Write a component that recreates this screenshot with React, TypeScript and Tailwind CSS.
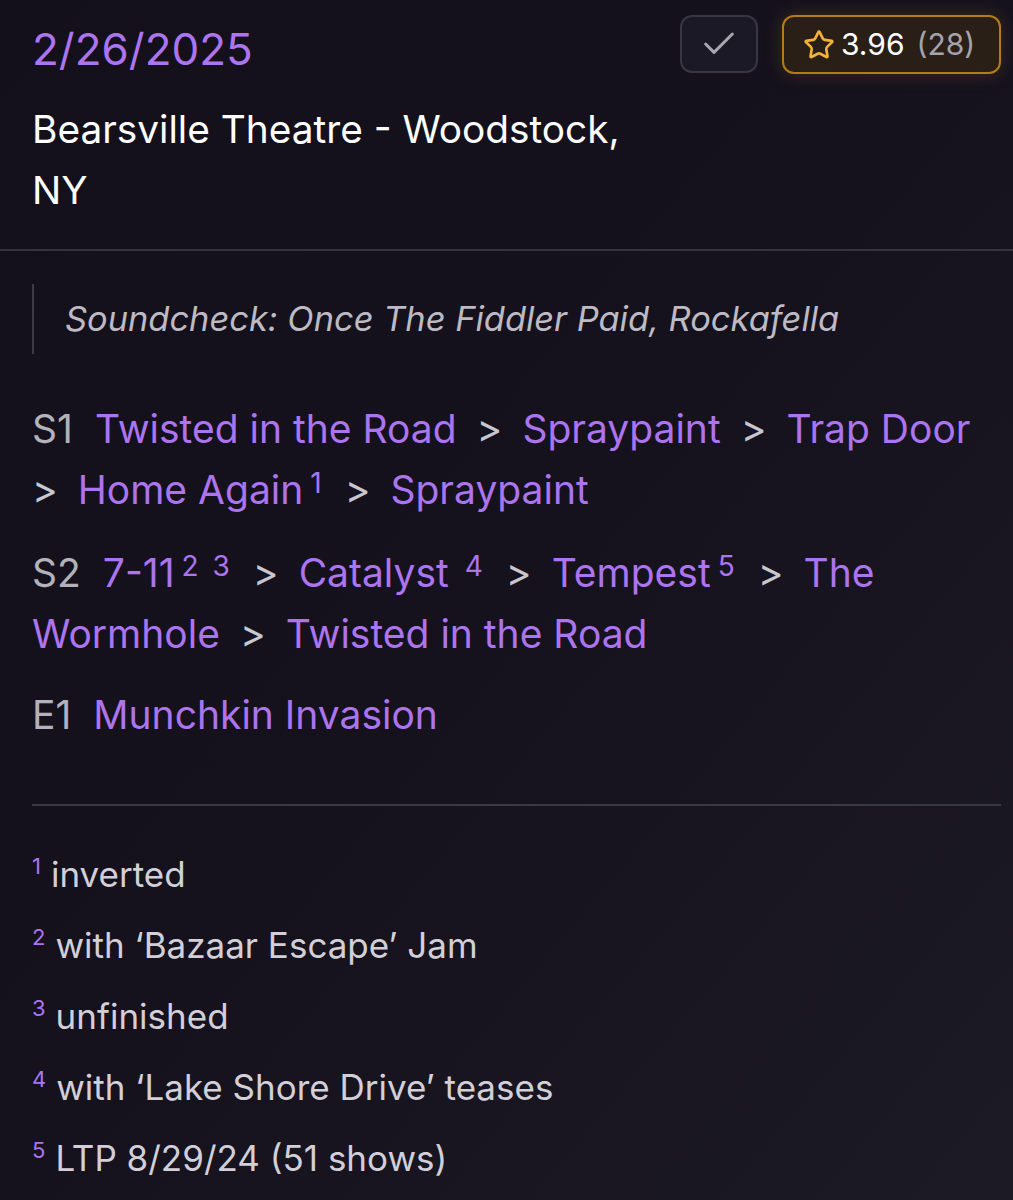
import React from "react";
import { Check, Star } from "lucide-react";

type Song = { title: string; notes?: string; spaced?: boolean };

const font = { fontFamily: "Inter, 'Noto Sans', sans-serif" };

function Arrow({ first }: { first?: boolean }) {
  return (
    <span className={first ? "mr-[20px] text-[#c8c6ce]" : "mx-[20px] text-[#c8c6ce]"}>
      &gt;
    </span>
  );
}

function SongLink({ song }: { song: Song }) {
  return (
    <span className="text-[#ac74ef]">
      {song.title}
      {song.notes && (
        <sup
          className={
            song.spaced
              ? "ml-[16px] text-[28px] top-[-11px] tracking-[3px]"
              : "ml-[7px] text-[28px] top-[-11px] tracking-[3px]"
          }
        >
          {song.notes}
        </sup>
      )}
    </span>
  );
}

function SetBlock({
  label,
  lines,
  className,
}: {
  label: string;
  lines: { songs: Song[]; leadArrow?: boolean }[];
  className?: string;
}) {
  return (
    <div className={className}>
      {lines.map((line, i) => (
        <div key={i} className="flex whitespace-nowrap">
          {i === 0 && <span className="mr-[22px] text-[#b3b1ba]">{label}</span>}
          {line.leadArrow && <Arrow first />}
          {line.songs.map((s, j) => (
            <React.Fragment key={j}>
              {j > 0 && <Arrow />}
              <SongLink song={s} />
            </React.Fragment>
          ))}
        </div>
      ))}
    </div>
  );
}

const footnotes = [
  "inverted",
  "with \u2018Bazaar Escape\u2019 Jam",
  "unfinished",
  "with \u2018Lake Shore Drive\u2019 teases",
  "LTP 8/29/24 (51 shows)",
];

export default function App() {
  return (
    <div
      style={font}
      className="min-h-[1200px] w-[1013px] overflow-hidden bg-gradient-to-br from-[#13101b] via-[#15121e] to-[#1c1a24] text-white"
    >
      <div className="pl-[32px] pr-[12px] pt-[15px] pb-[29px]">
        <div className="flex items-start justify-between">
          <div className="mt-[5px] text-[44px] leading-[59px] text-[#ac74ef]">2/26/2025</div>
          <div className="flex gap-[24px]">
            <button className="flex h-[58px] w-[78px] items-center justify-center rounded-[12px] border-2 border-[#383644] bg-[#1b1925]">
              <Check size={40} className="text-[#a8a6b0]" strokeWidth={1.8} />
            </button>
            <button className="flex h-[59px] w-[219px] items-center gap-[6px] rounded-[12px] border-2 border-[#b47c17] bg-[#2a1f17] pl-[19px] shadow-[0_0_18px_rgba(180,124,23,0.25)]">
              <Star size={32} className="text-[#f2b13a]" strokeWidth={2} />
              <span className="text-[30px] text-white">3.96</span>
              <span className="ml-[6px] text-[30px] text-[#a5a3ab]">(28)</span>
            </button>
          </div>
        </div>
        <div className="mt-[19px] text-[38.8px] leading-[61px] text-white">
          Bearsville Theatre - Woodstock,
          <br />
          NY
        </div>
      </div>

      <div className="h-[2px] bg-[#35333e]" />

      <div className="pl-[32px] pr-[12px]">
        <div className="mt-[33px] border-l-2 border-[#3c3a44] pl-[31px] text-[34.4px] italic leading-[70px] text-[#bdbac3]">
          Soundcheck: Once The Fiddler Paid, Rockafella
        </div>

        <div className="text-[39px] leading-[61px]">
          <SetBlock
            className="mt-[44px]"
            label="S1"
            lines={[
              {
                songs: [
                  { title: "Twisted in the Road" },
                  { title: "Spraypaint" },
                  { title: "Trap Door" },
                ],
              },
              {
                leadArrow: true,
                songs: [{ title: "Home Again", notes: "1" }, { title: "Spraypaint" }],
              },
            ]}
          />
          <SetBlock
            className="mt-[22px]"
            label="S2"
            lines={[
              {
                songs: [
                  { title: "7-11", notes: "2 3" },
                  { title: "Catalyst", notes: "4", spaced: true },
                  { title: "Tempest", notes: "5" },
                  { title: "The" },
                ],
              },
              {
                songs: [{ title: "Wormhole" }, { title: "Twisted in the Road" }],
              },
            ]}
          />
          <SetBlock
            className="mt-[20px]"
            label="E1"
            lines={[{ songs: [{ title: "Munchkin Invasion" }] }]}
          />
        </div>

        <div className="mt-[59px] h-[2px] bg-[#3a3843]" />

        <div className="mt-[33px] text-[35px] leading-[71px] text-[#d2cfd8]">
          {footnotes.map((note, i) => (
            <div key={i}>
              <sup className="mr-[10px] text-[22px] top-[-13px] text-[#ac74ef]">{i + 1}</sup>
              {note}
            </div>
          ))}
        </div>
      </div>
    </div>
  );
}
